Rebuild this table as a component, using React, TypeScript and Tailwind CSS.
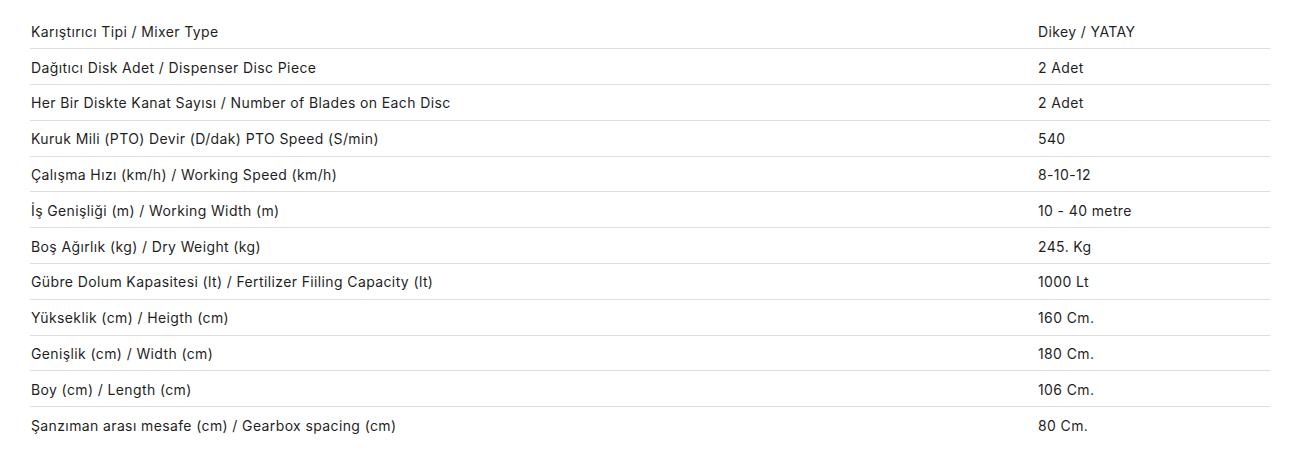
import React from 'react';

const rows: [string, string][] = [
  ['Karıştırıcı Tipi / Mixer Type', 'Dikey / YATAY'],
  ['Dağıtıcı Disk Adet / Dispenser Disc Piece', '2 Adet'],
  ['Her Bir Diskte Kanat Sayısı / Number of Blades on Each Disc', '2 Adet'],
  ['Kuruk Mili (PTO) Devir (D/dak) PTO Speed (S/min)', '540'],
  ['Çalışma Hızı (km/h) / Working Speed (km/h)', '8-10-12'],
  ['İş Genişliği (m) / Working Width (m)', '10 - 40 metre'],
  ['Boş Ağırlık (kg) / Dry Weight (kg)', '245. Kg'],
  ['Gübre Dolum Kapasitesi (lt) / Fertilizer Fiiling Capacity (lt)', '1000 Lt'],
  ['Yükseklik (cm) / Heigth (cm)', '160 Cm.'],
  ['Genişlik (cm) / Width (cm)', '180 Cm.'],
  ['Boy (cm) / Length (cm)', '106 Cm.'],
  ['Şanzıman arası mesafe (cm) / Gearbox spacing (cm)', '80 Cm.'],
];

const App: React.FC = () => {
  return (
    <div className="w-[1305px] h-[453px] bg-white pt-[13.5px] pl-[30px]" style={{ fontFamily: 'Inter, "Open Sans", sans-serif' }}>
      <div className="w-[1240px]">
        {rows.map(([label, value], i) => (
          <div
            key={i}
            className={`grid grid-cols-[1008px_1fr] items-center h-[35.8px] pt-px text-[14px] tracking-[0.38px] text-[#1f1f1f] ${i < rows.length - 1 ? 'border-b border-[#dedede]' : ''}`}
          >
            <div className="pl-px">{label}</div>
            <div>{value}</div>
          </div>
        ))}
      </div>
    </div>
  );
};

export default App;
